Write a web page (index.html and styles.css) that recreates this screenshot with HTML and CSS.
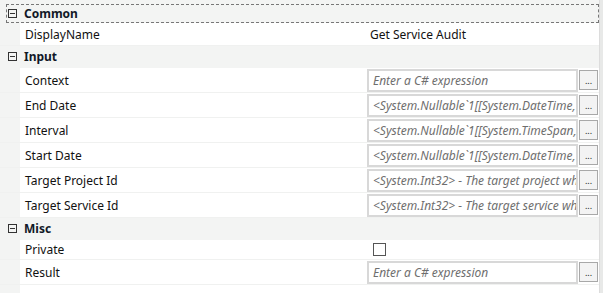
FILE: index.html
```html
<!DOCTYPE html>
<html lang="en">
<head>
  <meta charset="UTF-8">
  <title>Properties</title>
  <link rel="stylesheet" href="styles.css">
</head>
<body>
  <div class="panel">
    <div class="grid">
      <div class="category focused">
        <span class="gutter"><span class="toggle"></span></span>
        <span class="cat-name">Common</span>
      </div>
      <div class="row">
        <span class="gutter"></span>
        <span class="name">DisplayName</span>
        <span class="value text">Get Service Audit</span>
      </div>

      <div class="category">
        <span class="gutter"><span class="toggle"></span></span>
        <span class="cat-name">Input</span>
      </div>
      <div class="row tall">
        <span class="gutter"></span>
        <span class="name">Context</span>
        <span class="value"><span class="field">Enter a C# expression</span><span class="dots">...</span></span>
      </div>
      <div class="row tall">
        <span class="gutter"></span>
        <span class="name">End Date</span>
        <span class="value"><span class="field">&lt;System.Nullable`1[[System.DateTime, mscorlib]]&gt;</span><span class="dots">...</span></span>
      </div>
      <div class="row tall">
        <span class="gutter"></span>
        <span class="name">Interval</span>
        <span class="value"><span class="field">&lt;System.Nullable`1[[System.TimeSpan, mscorlib]]&gt;</span><span class="dots">...</span></span>
      </div>
      <div class="row tall">
        <span class="gutter"></span>
        <span class="name">Start Date</span>
        <span class="value"><span class="field">&lt;System.Nullable`1[[System.DateTime, mscorlib]]&gt;</span><span class="dots">...</span></span>
      </div>
      <div class="row tall">
        <span class="gutter"></span>
        <span class="name">Target Project Id</span>
        <span class="value"><span class="field">&lt;System.Int32&gt; - The target project which</span><span class="dots">...</span></span>
      </div>
      <div class="row tall">
        <span class="gutter"></span>
        <span class="name">Target Service Id</span>
        <span class="value"><span class="field">&lt;System.Int32&gt; - The target service which</span><span class="dots">...</span></span>
      </div>

      <div class="category">
        <span class="gutter"><span class="toggle"></span></span>
        <span class="cat-name">Misc</span>
      </div>
      <div class="row short">
        <span class="gutter"></span>
        <span class="name">Private</span>
        <span class="value"><span class="check"></span></span>
      </div>
      <div class="row tall">
        <span class="gutter"></span>
        <span class="name">Result</span>
        <span class="value"><span class="field">Enter a C# expression</span><span class="dots">...</span></span>
      </div>
      <div class="filler">
        <span class="gutter"></span>
      </div>
    </div>
    <div class="scroll"></div>
  </div>
</body>
</html>
```

FILE: styles.css
```css
body {
  margin: 0;
  font-family: "Noto Sans", "Open Sans", sans-serif;
  font-size: 12px;
  color: #111;
  background: #fff;
}

.panel {
  display: flex;
  height: 293px;
}

.grid {
  width: 599px;
  display: flex;
  flex-direction: column;
  background: #f3f4f3;
  padding-top: 4px;
}

.scroll {
  width: 4px;
  background: #e8e9e8;
  border-left: 1px solid #dcdcdc;
}

.gutter {
  width: 20px;
  flex: 0 0 20px;
  display: flex;
  align-items: center;
  justify-content: center;
  align-self: stretch;
  background: #f3f4f3;
}

.toggle {
  width: 9px;
  height: 9px;
  border: 1px solid #333;
  box-sizing: border-box;
  position: relative;
  margin-left: 4px;
}
.toggle::after {
  content: "";
  position: absolute;
  left: 1px;
  right: 1px;
  top: 3px;
  height: 1px;
  background: #333;
}

.category {
  display: flex;
  align-items: center;
  height: 20px;
  font-weight: bold;
  color: #111827;
  margin-bottom: 2px;
}
.category.focused {
  height: 19px;
  margin-left: 6px;
  margin-bottom: 0;
  outline: 1px dashed #777;
  outline-offset: -1px;
}
.category.focused .gutter {
  width: 14px;
  flex-basis: 14px;
  background: none;
}
.category.focused .toggle {
  margin-left: -2px;
}
.cat-name {
  padding-left: 4px;
}

.row {
  display: flex;
  align-items: center;
  height: 22px;
  background: #fff;
  border-bottom: 1px solid #f0f1f0;
}
.row.tall {
  height: 24px;
}
.row.short {
  height: 19px;
}

.name {
  flex: 0 0 347px;
  padding-left: 5px;
  box-sizing: border-box;
  white-space: nowrap;
}

.value {
  flex: 1;
  display: flex;
  align-items: center;
  gap: 1px;
  padding-right: 1px;
  min-width: 0;
}
.value.text {
  padding-left: 3px;
}

.field {
  flex: 0 0 211px;
  box-sizing: border-box;
  height: 23px;
  line-height: 19px;
  border: 2px solid #d8d8d8;
  padding-left: 4px;
  font-style: italic;
  color: #6e6e6e;
  white-space: nowrap;
  overflow: hidden;
  text-overflow: clip;
}

.dots {
  width: 20px;
  height: 20px;
  box-sizing: border-box;
  border: 1px solid #a8a8a8;
  background: #f3f3f3;
  font-size: 9px;
  line-height: 20px;
  text-align: center;
  color: #222;
}

.check {
  width: 13px;
  height: 13px;
  box-sizing: border-box;
  border: 1px solid #555;
  margin-left: 6px;
  background: #fff;
}

.filler {
  flex: 1;
  display: flex;
  background: #fff;
}
```
